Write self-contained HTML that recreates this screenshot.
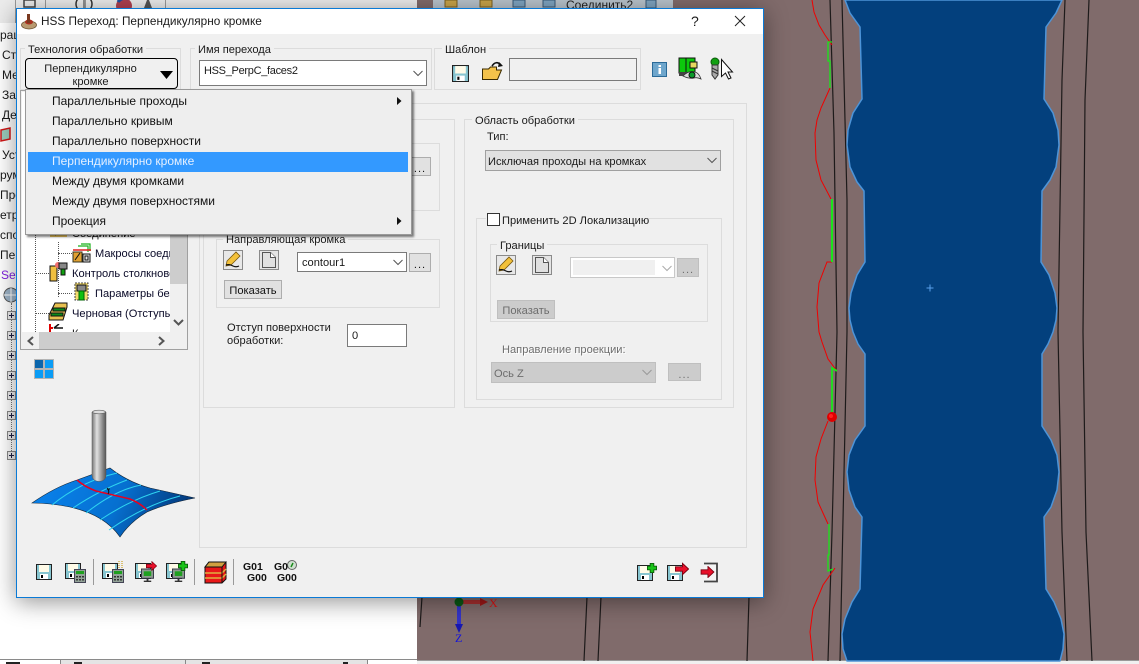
<!DOCTYPE html>
<html lang="ru"><head><meta charset="utf-8"><title>HSS Переход</title>
<style>
html,body{margin:0;padding:0}
body{width:1139px;height:664px;position:relative;overflow:hidden;background:#fff;font:11.1px/14px "Liberation Sans","Noto Sans CJK SC",sans-serif;color:#111}
div,span,svg{position:absolute;box-sizing:border-box}
.t{white-space:nowrap;color:#1a1a1a;margin-top:1px}
.g{border:1px solid #dcdcdc}
.lg{background:#f0f0f0;padding:0 3px;white-space:nowrap;color:#1a1a1a;height:14px;margin-top:1px}
.inp{background:#fff;border:1px solid #7a7a7a}
.btn{background:#e1e1e1;border:1px solid #adadad;text-align:center}
.dis{background:#ccc;border:1px solid #bfbfbf;color:#6d6d6d;text-align:center}
.dots{letter-spacing:1px;line-height:22px;overflow:hidden}
.chev{fill:none;stroke:#555;stroke-width:1}
.m{left:27px;white-space:nowrap;color:#111;height:14px;font-size:12px}
.l{left:0;width:16px;overflow:hidden;white-space:nowrap;height:14px;color:#1a1a1a;font-size:12px}
.pb{left:7px;width:9px;height:9px;border:1px solid #888;background:#eee}
.pb:after{content:"";position:absolute;left:1px;top:3px;width:5px;height:1px;background:#224}
.pb:before{content:"";position:absolute;left:3px;top:1px;width:1px;height:5px;background:#224}
</style></head><body>

<svg width="0" height="0" style="left:0;top:0">
<defs>
<symbol id="fl" viewBox="0 0 16 16"><path d="M.5.5h15v15H.5z" fill="#87c5d0" stroke="#222"/><rect x="3" y="1" width="10" height="7" fill="#fffbe8"/><rect x="4" y="10" width="8" height="5" fill="#fff"/><rect x="5" y="11" width="2" height="3" fill="#000"/></symbol>
<symbol id="calc" viewBox="0 0 12 14"><rect x=".5" y=".5" width="11" height="13" fill="#93a398" stroke="#445"/><rect x="2" y="2" width="8" height="3" fill="#1fa01f"/><path d="M2 7h2v1.500H2zM5 7h2v1.500H5zM8 7h2v1.500H8zM2 10h2v1.500H2zM5 10h2v1.500H5zM8 10h2v1.500H8z" fill="#333"/></symbol>
<symbol id="mon" viewBox="0 0 14 15"><rect x=".5" y=".5" width="13" height="10" fill="#8d9b90" stroke="#334"/><rect x="3" y="3" width="8" height="5" fill="#1fa01f"/><path d="M6 11h2v2h3v1.500H3V13h3z" fill="#333"/></symbol>
<symbol id="pen" viewBox="0 0 20 20"><rect x=".5" y=".5" width="19" height="19" fill="#e8e8e8" stroke="#8a8a8a"/><path d="M4 11L13 2l4 4-9 9-5 1z" fill="#f3c13a" stroke="#7a5a10" stroke-width=".8"/><path d="M3 15c3-1 5 0 7 1s4 1 6 0" fill="none" stroke="#111" stroke-width="1.200"/></symbol>
<symbol id="pg" viewBox="0 0 20 20"><rect x=".5" y=".5" width="19" height="19" fill="#e4e4e4" stroke="#8a8a8a"/><path d="M3.500 2.500h8l5 5v10h-13z" fill="#e0e0e0" stroke="#555"/><path d="M11.500 2.500v5h5" fill="#fff" stroke="#555"/></symbol>
<symbol id="ar" viewBox="0 0 16 14"><path d="M.5 4.500h8V.5l7 6.500-7 6.500v-4h-8z" fill="#e8102a" stroke="#7a0010"/></symbol>
<symbol id="pl" viewBox="0 0 11 11"><path d="M3.500.5h4v3h3v4h-3v3h-4v-3h-3v-4h3z" fill="#19c419" stroke="#0a600a"/></symbol>
</defs>
</svg>

<!-- top-left toolbar -->
<div style="left:0;top:0;width:417px;height:23px;background:#ececec"></div>
<div style="left:15px;top:0;width:1px;height:23px;background:#999"></div>
<div style="left:45px;top:0;width:1px;height:23px;background:#999"></div>
<div style="left:85px;top:0;width:1px;height:23px;background:#999"></div>
<div style="left:125px;top:0;width:1px;height:23px;background:#999"></div>
<div style="left:165px;top:0;width:1px;height:23px;background:#999"></div>
<svg style="left:18px;top:0" width="160" height="10"><rect x="6" y="0" width="11" height="7" fill="none" stroke="#444" stroke-width="1.500"/><circle cx="66" cy="4" r="8" fill="none" stroke="#333" stroke-width="1.500"/><path d="M66 0v9" stroke="#333"/><circle cx="106" cy="6" r="8" fill="#b04050"/><path d="M100 2a8 8 0 0 1 10-3" stroke="#2050a0" stroke-width="3" fill="none"/><path d="M126 8l3-8h2l3 8z" fill="#555"/></svg>

<!-- left tree behind dialog -->
<div class="l" style="top:28px">рац</div>
<div class="l" style="top:48px;left:2px;width:14px">Ста</div>
<div class="l" style="top:68px;left:2px;width:14px">Ме</div>
<div class="l" style="top:88px;left:2px;width:14px">Зап</div>
<div class="l" style="top:108px;left:2px;width:14px">Де</div>
<svg style="left:0;top:127px" width="12" height="16"><path d="M1 3l9-2v11l-9 2z" fill="#9cb" stroke="#d01818" stroke-width="1.500"/></svg>
<div class="l" style="top:148px;left:2px;width:14px">Уст</div>
<div class="l" style="top:168px">рум</div>
<div class="l" style="top:188px">Про</div>
<div class="l" style="top:208px">етр</div>
<div class="l" style="top:228px">спол</div>
<div class="l" style="top:248px">Пер</div>
<div class="l" style="top:268px;left:1px;width:15px;color:#8020e0">Set</div>
<svg style="left:2px;top:287px" width="14" height="16"><circle cx="9" cy="8" r="7" fill="#9db4c8" stroke="#555"/><path d="M9 1v14M2 8h14" stroke="#fff"/></svg>
<div style="left:11px;top:303px;width:1px;height:156px;border-left:1px dotted #777"></div>
<div class="pb" style="top:311px"></div><div class="pb" style="top:331px"></div><div class="pb" style="top:351px"></div><div class="pb" style="top:371px"></div><div class="pb" style="top:391px"></div><div class="pb" style="top:411px"></div><div class="pb" style="top:431px"></div><div class="pb" style="top:451px"></div>

<!-- bottom tabs -->
<div style="left:0;top:659px;width:417px;height:1px;background:#8a8a8a"></div>
<div style="left:60px;top:660px;width:126px;height:4px;background:#e4e4e4;border-left:1px solid #888;border-right:1px solid #888"></div>
<div style="left:186px;top:660px;width:182px;height:4px;background:#e4e4e4;border-right:1px solid #888"></div>
<div style="left:6px;top:662px;width:14px;height:2px;background:#222"></div>
<div style="left:74px;top:662px;width:8px;height:2px;background:#222"></div>
<div style="left:202px;top:662px;width:8px;height:2px;background:#222"></div>
<div style="left:343px;top:662px;width:5px;height:2px;background:#222"></div>

<!-- CAD viewport -->
<svg style="left:417px;top:0" width="722" height="664" viewBox="417 0 722 664">
<rect x="417" y="0" width="722" height="661" fill="#806b6b"/>
<rect x="417" y="661" width="722" height="3" fill="#f0f0f0"/>
<rect x="417" y="660" width="722" height="1" fill="#999"/>
<rect x="433" y="0" width="240" height="9" fill="#b9c3cc"/>
<path d="M445 0h12v7h-12zM480 0h12v7h-12z" fill="#c9a44a" stroke="#7a6020"/>
<path d="M513 0h12v7h-12zM543 0h12v7h-12zM646 0h10v8h-10z" fill="#7fa5c0" stroke="#3a5a78"/>
<text x="566" y="9" font-family="Liberation Sans" font-size="12" fill="#222">Соединить2</text>
<path d="M845 0L850 13L860 27L862 99L853 113L848 130L847 145L850 167L857 182L864 191L865 262L857 275L851 293L849 308L850 320L853 332L858 344L865 354L865 426L855 440L849 455L847 472L849 490L855 507L862 517L860 589L852 602L845 619L842 634L843 649L847 661H1060L1063 649L1064 634L1061 619L1054 602L1046 589L1044 517L1051 507L1057 490L1059 472L1057 455L1051 440L1042 426L1042 354L1048 344L1053 332L1056 320L1057 308L1055 293L1049 275L1041 262L1042 191L1050 180L1056 167L1059 145L1058 130L1053 113L1044 99L1046 27L1056 13L1062 0Z" fill="#03407d" stroke="#4d94d8" stroke-width="1.500" stroke-linejoin="round"/>
<g fill="none" stroke="#1d1a1a" stroke-width="1.200">
<path d="M830 0L834 133L837 332L832 532L828 661"/>
<path d="M842 0L847 200L847 332L840 661"/>
<path d="M1065 0L1062 80L1058 332L1062 532L1067 661"/>
<path d="M1089 0L1085 100L1083 332L1086 532L1092 661"/>
<path d="M587 597L584 661M601 597L598 661M749 597L747 661M422 597L420 627"/>
</g>
<g fill="none" stroke="#f00000" stroke-width="1">
<path d="M812 0L814 12L819 25L825 35L832 45"/>
<path d="M830 88L821 108L817 120L815 133L816 160L821 180L831 199"/>
<path d="M832 262H827L819 283L817 307L819 332L822 342L828 359L837 371"/>
<path d="M828 421L821 439L816 457L815 480L818 502L828 524"/>
<path d="M835 568L823 585L813 609L810 632L813 661"/>
</g>
<g fill="none" stroke="#19e619" stroke-width="1.300">
<path d="M832 42H828V61H830V88"/>
<path d="M832 199V262" stroke-width="2"/>
<path d="M837 371L832 368V412" stroke-width="1.800"/>
<path d="M829 524V555H828V571L833 569"/>
</g>
<circle cx="832" cy="417" r="5" fill="#e00000"/><circle cx="831" cy="416" r="2" fill="#ff2020"/>
<path d="M926.500 288h7M930 284.500v7" stroke="#5aa0ea" stroke-width="1"/>
<path d="M463 602H482" stroke="#a83030" stroke-width="4"/><path d="M480 598l8 4-8 4z" fill="#a01818"/>
<path d="M459 606V626" stroke="#3434c8" stroke-width="4"/><path d="M455 624h8l-4 9z" fill="#1818b0"/>
<circle cx="459" cy="602" r="4.500" fill="#0a5a14"/>
<text x="489" y="607" font-family="Liberation Serif" font-size="12" fill="#e01010">X</text>
<text x="455" y="642" font-family="Liberation Serif" font-size="12" fill="#1010e0">Z</text>
</svg>

<!-- dialog -->
<div style="left:16px;top:8px;width:748px;height:590px;background:#f0f0f0;border:1px solid #0a7ad6;box-shadow:0 4px 22px rgba(0,0,0,.42)"></div>
<div style="left:17px;top:9px;width:746px;height:25px;background:#fff"></div>
<svg style="left:20px;top:12px" width="18" height="18"><ellipse cx="9" cy="13" rx="7.500" ry="4" fill="#b89a70" stroke="#6a5030" stroke-width=".8"/><ellipse cx="9" cy="10" rx="4" ry="2.500" fill="#a83020"/><rect x="7" y="2" width="3" height="9" fill="#7a3a20"/></svg>
<div class="t" style="left:41px;top:13px;font-size:11.800px">HSS Переход: Перпендикулярно кромке</div>
<div class="t" style="left:691px;top:13px;font-size:14px">?</div>
<svg style="left:734px;top:15px" width="12" height="12"><path d="M1 1l10 10M11 1L1 11" stroke="#222" stroke-width="1"/></svg>

<!-- tech group -->
<div class="g" style="left:20px;top:48px;width:161px;height:42px"></div>
<div class="lg" style="left:25px;top:42px">Технология обработки</div>
<div style="left:25px;top:58px;width:153px;height:31px;background:#f0f0f0;border:1px solid #000;border-radius:4px"></div>
<div class="t" style="left:25px;top:62px;width:131px;text-align:center;line-height:13px;white-space:normal">Перпендикулярно<br>кромке</div>
<svg style="left:159px;top:70px" width="15" height="10"><path d="M1 1h13l-6.500 8z" fill="#000"/></svg>

<!-- name group -->
<div class="g" style="left:190px;top:48px;width:242px;height:42px"></div>
<div class="lg" style="left:195px;top:42px">Имя перехода</div>
<div class="inp" style="left:199px;top:60px;width:228px;height:26px"></div>
<div class="t" style="left:204px;top:63px;font-size:11px;letter-spacing:-.3px">HSS_PerpC_faces2</div>
<svg style="left:413px;top:70px" width="10" height="7"><path class="chev" d="M.5 1l4.500 4.500L9.500 1"/></svg>

<!-- template group -->
<div class="g" style="left:434px;top:48px;width:207px;height:42px"></div>
<div class="lg" style="left:442px;top:42px">Шаблон</div>
<svg style="left:452px;top:65px" width="17" height="17"><use href="#fl" width="17" height="17"/></svg>
<svg style="left:481px;top:60px" width="23" height="21"><path d="M1.500 19.500V9h6l2-2h6v3h5l-4 9.500z" fill="#f4c24a" stroke="#3a2a00"/><path d="M11 6Q15 0 20 5" fill="none" stroke="#111" stroke-width="1.600"/><path d="M18 2l4 4-5 1z" fill="#111"/></svg>
<div style="left:509px;top:58px;width:128px;height:23px;background:#f0f0f0;border:1px solid #7a7a7a"></div>

<svg style="left:652px;top:62px" width="15" height="15"><rect x=".5" y=".5" width="14" height="14" fill="#6ea6cc" stroke="#2a6a98"/><rect x="6.500" y="3" width="2.500" height="2" fill="#fff"/><rect x="6.500" y="6" width="2.500" height="6" fill="#fff"/></svg>
<svg style="left:678px;top:57px" width="24" height="24"><rect x="1" y="1" width="16" height="15" fill="#0cc80c" stroke="#111"/><path d="M8 1v14" stroke="#111"/><rect x="1" y="15" width="16" height="4" fill="#444"/><rect x="12" y="5" width="7" height="6" fill="#e8d860" stroke="#111"/><path d="M5 19q6-6 12-4 4 1 6 7-4-2-7-1-5 1-11-2z" fill="#ddd" stroke="#333" stroke-width=".8"/><circle cx="14" cy="18" r="3" fill="#0a9a2a" stroke="#111"/></svg>
<svg style="left:709px;top:57px" width="26" height="24"><circle cx="6" cy="5" r="4" fill="#12a012" stroke="#0a5a0a"/><path d="M3 8h6v10l-3 4-3-4z" fill="#aaa" stroke="#333"/><path d="M3 11l6 3M3 14l6 3" stroke="#333"/><path d="M12.500 2.500v17l4-3.500 3 6 2.500-1-3-6h4.500z" fill="#fff" stroke="#111"/></svg>

<!-- main panel -->
<div class="g" style="left:199px;top:103px;width:548px;height:445px"></div>
<div class="g" style="left:203px;top:119px;width:252px;height:289px"></div>
<div class="g" style="left:216px;top:143px;width:224px;height:68px"></div>
<div class="btn dots" style="left:409px;top:157px;width:22px;height:19px">...</div>

<!-- guide edge -->
<div class="g" style="left:216px;top:239px;width:224px;height:69px"></div>
<div class="lg" style="left:223px;top:232px">Направляющая кромка</div>
<svg style="left:223px;top:250px" width="20" height="20"><use href="#pen" width="20" height="20"/></svg>
<svg style="left:259px;top:250px" width="20" height="20"><use href="#pg" width="20" height="20"/></svg>
<div class="inp" style="left:297px;top:252px;width:110px;height:20px"></div>
<div class="t" style="left:302px;top:255px">contour1</div>
<svg style="left:393px;top:259px" width="10" height="7"><path class="chev" d="M.5 1l4.500 4.500L9.500 1"/></svg>
<div class="btn dots" style="left:409px;top:253px;width:22px;height:19px">...</div>
<div class="btn" style="left:224px;top:280px;width:58px;height:19px;line-height:20px">Показать</div>
<div class="t" style="left:227px;top:321px;line-height:13px">Отступ поверхности<br>обработки:</div>
<div class="inp" style="left:347px;top:324px;width:60px;height:23px"></div>
<div class="t" style="left:352px;top:328px">0</div>

<!-- machining area -->
<div class="g" style="left:464px;top:119px;width:270px;height:289px"></div>
<div class="lg" style="left:472px;top:113px">Область обработки</div>
<div class="t" style="left:487px;top:129px">Тип:</div>
<div style="left:485px;top:150px;width:236px;height:21px;background:#e1e1e1;border:1px solid #a0a0a0"></div>
<div class="t" style="left:488px;top:154px">Исключая проходы на кромках</div>
<svg style="left:707px;top:157px" width="10" height="7"><path class="chev" d="M.5 1l4.500 4.500L9.500 1"/></svg>

<div class="g" style="left:476px;top:218px;width:246px;height:182px"></div>
<div class="lg" style="left:486px;top:212px;width:162px"></div>
<div style="left:487px;top:213px;width:13px;height:13px;background:#fff;border:1px solid #333"></div>
<div class="t" style="left:502px;top:213px">Применить 2D Локализацию</div>

<div class="g" style="left:490px;top:244px;width:218px;height:78px"></div>
<div class="lg" style="left:497px;top:238px">Границы</div>
<svg style="left:496px;top:255px" width="20" height="20"><use href="#pen" width="20" height="20"/></svg>
<svg style="left:532px;top:255px" width="20" height="20"><use href="#pg" width="20" height="20"/></svg>
<div style="left:570px;top:257px;width:105px;height:21px;background:#fff;border:1px solid #c8c8c8"></div>
<div style="left:573px;top:260px;width:82px;height:15px;background:#f0f0f0"></div>
<svg style="left:662px;top:265px" width="10" height="7"><path d="M.5 1l4.500 4.500L9.500 1" fill="none" stroke="#aaa"/></svg>
<div class="dis dots" style="left:677px;top:258px;width:22px;height:19px">...</div>
<div class="dis" style="left:497px;top:300px;width:58px;height:19px;line-height:20px">Показать</div>
<div class="t" style="left:502px;top:342px;color:#6d6d6d;text-shadow:1px 1px 0 #fff">Направление проекции:</div>
<div class="dis" style="left:491px;top:362px;width:165px;height:21px"></div>
<div class="t" style="left:494px;top:366px;color:#6d6d6d">Ось Z</div>
<svg style="left:642px;top:369px" width="10" height="7"><path d="M.5 1l4.500 4.500L9.500 1" fill="none" stroke="#999"/></svg>
<div class="dis dots" style="left:668px;top:363px;width:33px;height:18px">...</div>

<!-- tree panel -->
<div style="left:20px;top:90px;width:168px;height:260px;background:#f0f0f0;border:1px solid #a0a0a0"></div>
<div style="left:22px;top:92px;width:148px;height:240px;background:#fff;overflow:hidden">
  <div style="left:13px;top:120px;width:1px;height:220px;border-left:1px dotted #555"></div>
  <div style="left:36px;top:150px;width:1px;height:55px;border-left:1px dotted #555"></div>
  <div style="left:13px;top:181px;width:14px;height:1px;border-top:1px dotted #555"></div>
  <div style="left:13px;top:221px;width:14px;height:1px;border-top:1px dotted #555"></div>
  <div style="left:36px;top:161px;width:14px;height:1px;border-top:1px dotted #555"></div>
  <div style="left:36px;top:201px;width:14px;height:1px;border-top:1px dotted #555"></div>
  <svg style="left:27px;top:130px" width="18" height="16"><rect x="1" y="0" width="17" height="15" fill="#f2cc60"/><path d="M6 13l6-6" stroke="#111" stroke-width="1.500"/></svg>
  <div class="t" style="left:50px;top:134px;color:#111">Соединение</div>
  <svg style="left:50px;top:151px" width="20" height="20"><path d="M6 3h10v6M9 1h9v7" fill="none" stroke="#19b019" stroke-width="1.200"/><rect x="1" y="9" width="9" height="10" fill="#e0a030" stroke="#332"/><path d="M3 17l5-7" stroke="#111"/><rect x="11" y="11" width="7" height="8" fill="#e8e8e8" stroke="#111"/><rect x="13" y="13" width="3" height="4" fill="none" stroke="#111"/><path d="M1 7h18" stroke="#e02020" stroke-width="1.500"/></svg>
  <div class="t" style="left:73px;top:154px;color:#0a0a28">Макросы соединений</div>
  <svg style="left:27px;top:170px" width="20" height="20"><rect x="1" y="4" width="7" height="15" fill="#f0c040" stroke="#111"/><circle cx="9" cy="3" r="3" fill="#f07070"/><rect x="10" y="1" width="8" height="6" fill="#888" stroke="#111"/><rect x="12" y="7" width="4" height="6" fill="#10a010" stroke="#111"/></svg>
  <div class="t" style="left:50px;top:174px;color:#0a0a28">Контроль столкновений</div>
  <svg style="left:52px;top:190px" width="16" height="20"><rect x="1" y="1" width="13" height="17" fill="#f4dc70" stroke="#444" stroke-dasharray="2 1"/><rect x="3" y="3" width="9" height="6" fill="#888" stroke="#111"/><rect x="5" y="9" width="5" height="9" fill="#10c010" stroke="#060"/></svg>
  <div class="t" style="left:73px;top:194px;color:#0a0a28">Параметры без</div>
  <svg style="left:26px;top:209px" width="20" height="20"><path d="M1 19v-5l3-6 3-6h12v4l-4 13z" fill="#e8c050" stroke="#111"/><path d="M5 7h12v3H5z" fill="#0a8a1a" stroke="#111"/><path d="M3 12h12v3H3z" fill="#0a8a1a" stroke="#111"/></svg>
  <div class="t" style="left:50px;top:214px;color:#0a0a28">Черновая (Отступы</div>
  <svg style="left:27px;top:232px" width="20" height="8"><path d="M1 0v8M2 4h2" stroke="#e00000" stroke-width="2"/><path d="M5 4l5-4M5 4h9" stroke="#111" stroke-width="1.500" fill="none"/></svg>
  <div class="t" style="left:50px;top:234px">К</div>
</div>
<div style="left:170px;top:92px;width:17px;height:240px;background:#f0f0f0"></div>
<div style="left:170px;top:92px;width:17px;height:192px;background:#cdcdcd"></div>
<svg style="left:173px;top:319px" width="11" height="8"><path d="M1 1l4.500 4.500L10 1" fill="none" stroke="#555" stroke-width="2"/></svg>
<div style="left:22px;top:332px;width:165px;height:17px;background:#f0f0f0"></div>
<div style="left:39px;top:332px;width:81px;height:17px;background:#cdcdcd"></div>
<svg style="left:27px;top:336px" width="8" height="10"><path d="M6 1L1.500 5 6 9" fill="none" stroke="#555" stroke-width="2"/></svg>
<svg style="left:157px;top:336px" width="8" height="10"><path d="M2 1l4.500 4L2 9" fill="none" stroke="#555" stroke-width="2"/></svg>

<!-- grid button -->
<div style="left:34px;top:359px;width:20px;height:20px;background:#b4b4b4"></div>
<div style="left:35px;top:360px;width:8px;height:8px;background:#0b66ac"></div>
<div style="left:45px;top:360px;width:8px;height:8px;background:#0a9cf5"></div>
<div style="left:35px;top:370px;width:8px;height:8px;background:#0a9cf5"></div>
<div style="left:45px;top:370px;width:8px;height:8px;background:#0a9cf5"></div>

<!-- 3D picture -->
<svg style="left:28px;top:405px" width="172" height="135" viewBox="28 405 172 135">
<defs>
<linearGradient id="sf" x1="0" x2="1" y1="0" y2=".2"><stop offset="0" stop-color="#0a84f0"/><stop offset=".6" stop-color="#0670d0"/><stop offset="1" stop-color="#033c80"/></linearGradient>
<linearGradient id="cy" x1="0" x2="1"><stop offset="0" stop-color="#777"/><stop offset=".35" stop-color="#e0e0e0"/><stop offset="1" stop-color="#555"/></linearGradient>
</defs>
<path d="M32 503Q55 487 77 480L110 468Q128 482 150 488L195 498Q165 504 147 512Q130 522 120 537Q105 515 70 507Q50 503 32 503Z" fill="url(#sf)" stroke="#123" stroke-width=".6"/>
<g fill="none" stroke="#2fd4f0" stroke-width="1">
<path d="M52 505Q80 482 117 473"/><path d="M73 508Q100 490 127 480"/><path d="M86 513Q115 490 141 485"/><path d="M100 520Q130 500 160 491"/><path d="M109 530Q145 505 180 496"/>
</g>
<path d="M77 480Q85 487 96 491Q113 495 130 499Q140 503 147 510" fill="none" stroke="#e80020" stroke-width="1.500"/>
<path d="M107 488q3 3 1 6" fill="none" stroke="#111"/><path d="M107 489h3" stroke="#111"/>
<path d="M92 412V475Q92 481 99 481.500Q106 481 106 475V412z" fill="url(#cy)" stroke="#555" stroke-width=".5"/>
<ellipse cx="99" cy="412" rx="6.500" ry="1.800" fill="#ddd" stroke="#666" stroke-width=".7"/>
</svg>

<!-- bottom toolbar -->
<svg style="left:30px;top:555px" width="280" height="35" viewBox="30 555 280 35">
<use href="#fl" x="36" y="564" width="16" height="16"/>
<use href="#fl" x="65" y="563" width="16" height="16"/><use href="#calc" x="74" y="569" width="12" height="14"/>
<rect x="93" y="559" width="1" height="26" fill="#999"/>
<use href="#fl" x="102" y="563" width="16" height="16"/><use href="#calc" x="112" y="569" width="12" height="14"/>
<path d="M119 561v7M122 561v7" stroke="#caa020" stroke-dasharray="1 1" stroke-width="1.200"/>
<use href="#fl" x="135" y="563" width="16" height="16"/><use href="#mon" x="141" y="568" width="13" height="15"/><use href="#ar" x="146" y="561" width="11" height="10"/>
<use href="#fl" x="166" y="563" width="16" height="16"/><use href="#mon" x="172" y="568" width="13" height="15"/><use href="#pl" x="178" y="561" width="10" height="10"/>
<rect x="194" y="559" width="1" height="26" fill="#999"/>
<path d="M205 567l4-5h17v17l-4 4h-17z" fill="#e81818" stroke="#111"/>
<path d="M205 567l4-5h17l-4 5z" fill="#d0a040" stroke="#111"/>
<path d="M205 573h17l4-4M205 578h17l4-4" fill="none" stroke="#e0b040" stroke-width="1.500"/><path d="M222 567v16" stroke="#111"/>
<rect x="233" y="559" width="1" height="26" fill="#999"/>
<circle cx="292" cy="565" r="4.500" fill="#cfe0d0" stroke="#666"/><path d="M291 567l2-4" stroke="#1a8a1a" stroke-width="1.500"/>
</svg>
<div class="t" style="left:243px;top:559px;font-size:10.500px;font-weight:bold;color:#111">G01</div>
<div class="t" style="left:247px;top:570px;font-size:10.500px;font-weight:bold;color:#111">G00</div>
<div class="t" style="left:274px;top:559px;font-size:10.500px;font-weight:bold;color:#111">G0</div>
<div class="t" style="left:277px;top:570px;font-size:10.500px;font-weight:bold;color:#111">G00</div>

<svg style="left:635px;top:558px" width="90" height="28" viewBox="635 558 90 28">
<use href="#fl" x="637" y="565" width="16" height="16"/><use href="#pl" x="647" y="563" width="10" height="10"/>
<use href="#fl" x="667" y="565" width="16" height="16"/><use href="#ar" x="675" y="562" width="14" height="14"/>
<path d="M704 563.500h13v18h-13" fill="#f4f4f4" stroke="#444" stroke-width="1.800"/>
<use href="#ar" x="700" y="566" width="15" height="12"/>
</svg>

<!-- drop-down menu -->
<div style="left:25px;top:89px;width:387px;height:146px;background:#eee;border:1px solid #999;box-shadow:2px 2px 2px rgba(0,0,0,.5)">
  <div style="left:2px;top:62px;width:380px;height:20px;background:#3399ff"></div>
  <div class="m" style="left:26px;top:4px">Параллельные проходы</div>
  <div class="m" style="left:26px;top:24px">Параллельно кривым</div>
  <div class="m" style="left:26px;top:44px">Параллельно поверхности</div>
  <div class="m" style="left:26px;top:64px;color:#e6f0ff">Перпендикулярно кромке</div>
  <div class="m" style="left:26px;top:84px">Между двумя кромками</div>
  <div class="m" style="left:26px;top:104px">Между двумя поверхностями</div>
  <div class="m" style="left:26px;top:124px">Проекция</div>
  <svg style="left:371px;top:7px" width="5" height="8"><path d="M0 0l4.500 4L0 8z" fill="#111"/></svg>
  <svg style="left:371px;top:127px" width="5" height="8"><path d="M0 0l4.500 4L0 8z" fill="#111"/></svg>
</div>
</body></html>
